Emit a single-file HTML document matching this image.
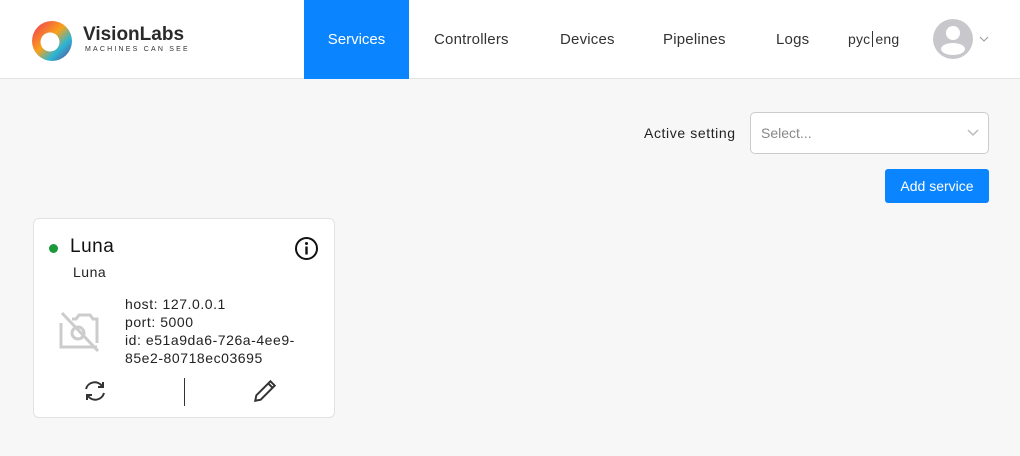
<!DOCTYPE html>
<html><head><meta charset="utf-8"><style>
*{box-sizing:border-box;margin:0;padding:0}
body{width:1020px;height:456px;background:#f7f7f7;font-family:"Liberation Sans",sans-serif;position:relative;overflow:hidden;color:#222}
.hdr{position:absolute;left:0;top:0;width:1020px;height:79px;background:#fff;border-bottom:1px solid #e4e4e4}
.nav{position:absolute;top:31px;font-size:15px;color:#333;letter-spacing:.2px}
.act{position:absolute;left:304px;top:0;width:105px;height:79px;background:#0b84ff;color:#fff;font-size:15px;text-align:center;line-height:79px}
.card{position:absolute;left:33px;top:218px;width:302px;height:200px;background:#fff;border:1px solid #e2e2e2;border-radius:6px}
.t{position:absolute;font-size:14px;color:#222;letter-spacing:.6px}
</style></head><body>
<div class="hdr">
<svg style="position:absolute;left:31px;top:20px" width="42" height="42" viewBox="0 0 42 42">
<defs><linearGradient id="g" x1="0" y1="0" x2="1" y2="1"><stop offset="0" stop-color="#f0305a"/><stop offset=".45" stop-color="#f9a21a"/><stop offset=".7" stop-color="#2ab6d6"/><stop offset="1" stop-color="#6a3a8a"/></linearGradient></defs>
<circle cx="21" cy="21" r="20" fill="url(#g)"/><circle cx="19" cy="22" r="9.5" fill="#fff"/></svg>
<div style="position:absolute;left:83px;top:24px;font-size:19px;font-weight:bold;color:#2a2a2a">VisionLabs</div>
<div style="position:absolute;left:85px;top:46px;font-size:7px;letter-spacing:2.2px;color:#333">MACHINES CAN SEE</div>
<div class="act">Services</div>
<div class="nav" style="left:434px">Controllers</div>
<div class="nav" style="left:560px">Devices</div>
<div class="nav" style="left:663px">Pipelines</div>
<div class="nav" style="left:776px">Logs</div>
<div class="nav" style="left:848px;font-size:14px">pyc<span style="border-left:1px solid #333;margin:0 2px"></span>eng</div>
<svg style="position:absolute;left:933px;top:19px" width="40" height="40" viewBox="0 0 40 40"><circle cx="20" cy="20" r="20" fill="#c8c8cc"/><circle cx="20" cy="14" r="7" fill="#fff"/><ellipse cx="20" cy="30" rx="12" ry="6" fill="#fff"/></svg>
<svg style="position:absolute;left:979px;top:36px" width="10" height="6"><path d="M1 1l4 4 4-4" stroke="#999" fill="none"/></svg>
</div>
<div class="t" style="left:644px;top:125px">Active setting</div>
<div style="position:absolute;left:750px;top:112px;width:239px;height:42px;background:#fff;border:1px solid #ccc;border-radius:5px"><span style="position:absolute;left:10px;top:12px;font-size:14px;color:#888">Select...</span>
<svg style="position:absolute;left:216px;top:16px" width="12" height="8"><path d="M1 1l5 5 5-5" stroke="#bbb" stroke-width="1.5" fill="none"/></svg></div>
<div style="position:absolute;left:885px;top:169px;width:104px;height:34px;background:#0b84ff;border-radius:3px;color:#fff;font-size:14px;text-align:center;line-height:34px">Add service</div>
<div class="card">
<div style="position:absolute;left:15px;top:25px;width:9px;height:9px;border-radius:50%;background:#1a9a3a"></div>
<div style="position:absolute;left:36px;top:17px;font-size:19px;color:#111;letter-spacing:.5px">Luna</div>
<div style="position:absolute;left:39px;top:45px;font-size:14px;letter-spacing:.5px">Luna</div>
<svg style="position:absolute;left:260px;top:17px" width="25" height="25" viewBox="0 0 25 25"><circle cx="12.5" cy="12.5" r="10.5" stroke="#111" stroke-width="2" fill="none"/><circle cx="12.5" cy="7.5" r="1.5" fill="#111"/><rect x="11.3" y="10.5" width="2.4" height="8" fill="#111"/></svg>
<svg style="position:absolute;left:24px;top:92px" width="44" height="42" viewBox="0 0 44 42"><path d="M4 2l36 38" stroke="#ccc" stroke-width="3"/><path d="M3 12v24h36M14 8h4l3-4h11l3 4h4v24" stroke="#ccc" stroke-width="3" fill="none"/><circle cx="20" cy="22" r="6" stroke="#ccc" stroke-width="3" fill="none"/></svg>
<div style="position:absolute;left:91px;top:76px;font-size:14px;line-height:18px;color:#222;letter-spacing:.55px">host: 127.0.0.1<br>port: 5000<br>id: e51a9da6-726a-4ee9-<br>85e2-80718ec03695</div>
<svg style="position:absolute;left:49px;top:161px" width="24" height="22" viewBox="0 0 24 22"><path d="M3 9a9 9 0 0 1 16-3M21 13a9 9 0 0 1-16 3" stroke="#333" stroke-width="2" fill="none"/><path d="M20 2v5h-5M4 20v-5h5" stroke="#333" stroke-width="2" fill="none"/></svg>
<div style="position:absolute;left:150px;top:159px;width:1px;height:28px;background:#333"></div>
<svg style="position:absolute;left:218px;top:159px" width="26" height="26" viewBox="0 0 24 24"><path d="M3 21l1-5L17 3l4 4L8 20z M15 5l4 4" stroke="#333" stroke-width="1.8" fill="none"/></svg>
</div>
</body></html>
